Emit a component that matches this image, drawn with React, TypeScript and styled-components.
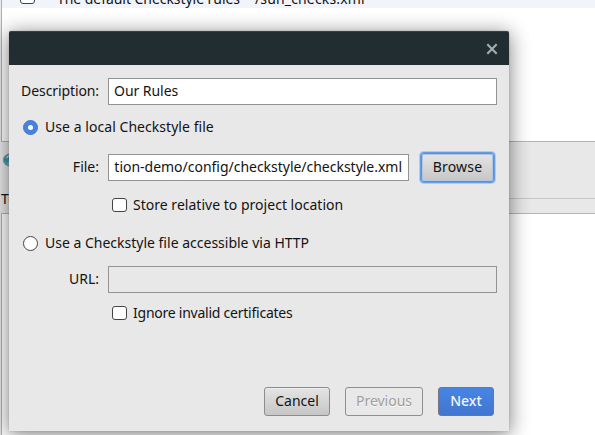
import React from 'react';
import styled, { createGlobalStyle, css } from 'styled-components';

const GlobalStyle = createGlobalStyle`
  * { box-sizing: border-box; }
  body {
    margin: 0;
    overflow: hidden;
    background: #e8e8e8;
    color: #131313;
    font: 14px/20px "Noto Sans", sans-serif;
  }
`;

const Window = styled.div`
  position: relative;
  width: 595px;
  height: 435px;
  overflow: hidden;
  background: #e8e8e8;
`;

const Backdrop = styled.div`
  display: flex;
  flex-direction: column;
  height: 100%;
  padding-left: 1px;
`;

const ConfigList = styled.div`
  height: 142px;
  flex: none;
  overflow: hidden;
  background: #fff;
  border-left: 1px solid #b0b0b0;
  border-bottom: 1px solid #b4b4b4;
`;

const ConfigRow = styled.div`
  display: flex;
  align-items: flex-end;
  height: 8px;
  padding-left: 18px;
  background: #f1f4fa;
`;

const RowCheck = styled.span`
  flex: none;
  width: 15px;
  height: 14px;
  margin-bottom: 4px;
  border: 1px solid #444;
  border-radius: 3px;
  background: #fff;
`;

const RowText = styled.span<{ $width: number; $gap: number; $track: number }>`
  flex: none;
  width: ${(p) => p.$width}px;
  margin: 0 0 -1px ${(p) => p.$gap}px;
  letter-spacing: ${(p) => p.$track}px;
  white-space: nowrap;
`;

const Toolbar = styled.div`
  display: flex;
  align-items: flex-start;
  height: 46px;
  padding: 11px 0 0 1px;
`;

const Group = styled.div`
  display: flex;
  align-items: center;
  height: 20px;
`;

const GroupRule = styled.div`
  flex: 1;
  height: 1px;
  background: #c6c6c6;
`;

const DetailsPane = styled.div`
  flex: 1;
  margin-top: 5px;
  background: #fff;
  border-left: 1px solid #b0b0b0;
  border-top: 1px solid #b4b4b4;
`;

const Dialog = styled.section`
  position: absolute;
  left: 9px;
  top: 31px;
  display: flex;
  flex-direction: column;
  width: 500px;
  height: 400px;
  border-radius: 2px 2px 0 0;
  background: #e8e8e8;
  box-shadow: 0 3px 20px 1px rgba(0, 0, 0, 0.48), 0 0 2px rgba(0, 0, 0, 0.2);
`;

const TitleBar = styled.header`
  display: flex;
  align-items: center;
  justify-content: flex-end;
  height: 34px;
  padding-right: 11px;
  border-top: 1px solid #364146;
  border-radius: 2px 2px 0 0;
  background: #222d32;
`;

const Form = styled.div`
  display: flex;
  flex-direction: column;
  padding: 13px 12px 0 13px;
`;

const Line = styled.div<{ $height: number; $top?: number; $indent?: number }>`
  display: flex;
  align-items: center;
  height: ${(p) => p.$height}px;
  margin-top: ${(p) => p.$top ?? 0}px;
  padding-left: ${(p) => p.$indent ?? 0}px;
`;

const FieldLabel = styled.label<{ $track?: number }>`
  width: 77px;
  margin: 0 9px 2px 0;
  display: flex;
  justify-content: flex-end;
  letter-spacing: ${(p) => p.$track ?? 0}px;
  white-space: nowrap;
`;

const Field = styled.div<{ $width: number; $disabled?: boolean; $fromEnd?: boolean }>`
  display: flex;
  align-items: center;
  justify-content: ${(p) => (p.$fromEnd ? 'flex-end' : 'flex-start')};
  width: ${(p) => p.$width}px;
  height: 27px;
  padding: 0 5px 2px;
  border: 1px solid #939393;
  background: ${(p) => (p.$disabled ? '#e8e8e8' : '#fff')};
  white-space: nowrap;
`;

const FieldClip = styled.span`
  display: flex;
  justify-content: flex-end;
  width: 289px;
  margin-right: 1px;
  overflow: hidden;
`;

const FieldText = styled.span<{ $track?: number }>`
  flex: none;
  letter-spacing: ${(p) => p.$track ?? 0}px;
`;

const Radio = styled.span<{ $on?: boolean }>`
  display: grid;
  place-items: center;
  flex: none;
  width: 15px;
  height: 15px;
  margin: 0 7px 0 1px;
  border: 1px solid ${(p) => (p.$on ? '#4377d0' : '#444')};
  border-radius: 50%;
  background: ${(p) => (p.$on ? '#4881df' : '#fff')};

  &::after {
    content: '';
    width: 5px;
    height: 5px;
    border-radius: 50%;
    background: #fff;
  }
`;

const Checkbox = styled.span`
  flex: none;
  width: 15px;
  height: 14px;
  margin-right: 6px;
  border: 1px solid #444;
  border-radius: 3px;
  background: #fff;
`;

const OptionText = styled.span<{ $track?: number }>`
  letter-spacing: ${(p) => p.$track ?? 0}px;
  white-space: nowrap;

  ${Radio} + & {
    margin-bottom: 2px;
  }
`;

const Footer = styled.footer`
  display: flex;
  justify-content: flex-end;
  gap: 15px;
  margin-top: auto;
  padding: 0 15px 15px 0;
`;

type Kind = 'normal' | 'disabled' | 'primary' | 'focused';

const kinds = {
  normal: css`
    border-color: #8c8c8c;
    background: linear-gradient(#e4e4e4, #c6c6c6);
    box-shadow: inset 0 1px #ededed;
  `,
  disabled: css`
    border-color: #8f8f8f;
    background: #e8e8e8;
    color: #9e9e9e;
    text-shadow: 0 1px #fafafa;
  `,
  primary: css`
    border-color: #707783;
    background: linear-gradient(#4785e3, #4176d0);
    color: #f3f6fb;
    font-weight: 500;
  `,
  focused: css`
    border-color: #5792dc;
    background: linear-gradient(#e4e4e4, #c6c6c6);
    box-shadow: 0 0 0 1px #639ce2, 0 0 0 2px #b1ccec, inset 0 0 0 1px #b3c6de;
  `,
};

const Button = styled.button<{ $kind: Kind; $width: number; $track?: number }>`
  display: flex;
  align-items: center;
  justify-content: center;
  flex: none;
  width: ${(p) => p.$width}px;
  height: 29px;
  padding: 0 0 1px;
  border: 1px solid;
  border-radius: 3px;
  color: #131313;
  font: inherit;
  letter-spacing: ${(p) => p.$track ?? 0}px;
  ${(p) => kinds[p.$kind]}
`;

const BrowseSlot = styled.div`
  margin-left: 12px;
`;

function CloseIcon() {
  return (
    <svg width="12" height="12" viewBox="0 0 12 12" fill="none">
      <path d="M1.3 1.3 10.7 10.7M10.7 1.3 1.3 10.7" stroke="#a6aeb0" strokeWidth="2.1" />
    </svg>
  );
}

function HelpIcon() {
  return (
    <svg width="14" height="14" viewBox="0 0 14 14">
      <defs>
        <linearGradient id="orb" x1="0" y1="0" x2="0" y2="1">
          <stop offset="0" stopColor="#6b9dac" />
          <stop offset="0.5" stopColor="#4390ad" />
          <stop offset="1" stopColor="#6ab4cc" />
        </linearGradient>
      </defs>
      <circle cx="7.4" cy="7" r="6" fill="url(#orb)" stroke="#628692" strokeWidth="0.6" />
      <path d="M4.9 5.2a2.2 2.2 0 1 1 3.3 1.9c-.8.5-1.1.8-1.1 1.6M7.1 10v1" fill="none" stroke="#d5edf5" strokeWidth="1.2" />
    </svg>
  );
}

export default function App() {
  return (
    <Window>
      <GlobalStyle />
      <Backdrop>
        <ConfigList>
          <ConfigRow>
            <RowCheck />
            <RowText $width={184} $gap={22} $track={-0.05}>The default Checkstyle rules</RowText>
            <RowText $width={120} $gap={14} $track={0.15}>/sun_checks.xml</RowText>
          </ConfigRow>
        </ConfigList>
        <Toolbar>
          <HelpIcon />
        </Toolbar>
        <Group>
          <RowText $width={70} $gap={0} $track={0.5}>Template</RowText>
          <GroupRule />
        </Group>
        <DetailsPane />
      </Backdrop>

      <Dialog>
        <TitleBar>
          <CloseIcon />
        </TitleBar>
        <Form>
          <Line $height={27}>
            <FieldLabel $track={-0.1}>Description:</FieldLabel>
            <Field $width={389}><FieldText $track={-0.05}>Our Rules</FieldText></Field>
          </Line>
          <Line $height={15} $top={15}>
            <Radio $on />
            <OptionText $track={0.05}>Use a local Checkstyle file</OptionText>
          </Line>
          <Line $height={27} $top={19}>
            <FieldLabel>File:</FieldLabel>
            <Field $width={301} $fromEnd>
              <FieldClip><FieldText $track={-0.02}>ation-demo/config/checkstyle/checkstyle.xml</FieldText></FieldClip>
            </Field>
            <BrowseSlot>
              <Button $kind="focused" $width={73} $track={0.2}>Browse</Button>
            </BrowseSlot>
          </Line>
          <Line $height={14} $top={17} $indent={90}>
            <Checkbox />
            <OptionText $track={0.02}>Store relative to project location</OptionText>
          </Line>
          <Line $height={15} $top={24}>
            <Radio />
            <OptionText>Use a Checkstyle file accessible via HTTP</OptionText>
          </Line>
          <Line $height={27} $top={15}>
            <FieldLabel>URL:</FieldLabel>
            <Field $width={389} $disabled />
          </Line>
          <Line $height={14} $top={13} $indent={90}>
            <Checkbox />
            <OptionText $track={-0.24}>Ignore invalid certificates</OptionText>
          </Line>
        </Form>
        <Footer>
          <Button $kind="normal" $width={66}>Cancel</Button>
          <Button $kind="disabled" $width={78}>Previous</Button>
          <Button $kind="primary" $width={56}>Next</Button>
        </Footer>
      </Dialog>
    </Window>
  );
}
